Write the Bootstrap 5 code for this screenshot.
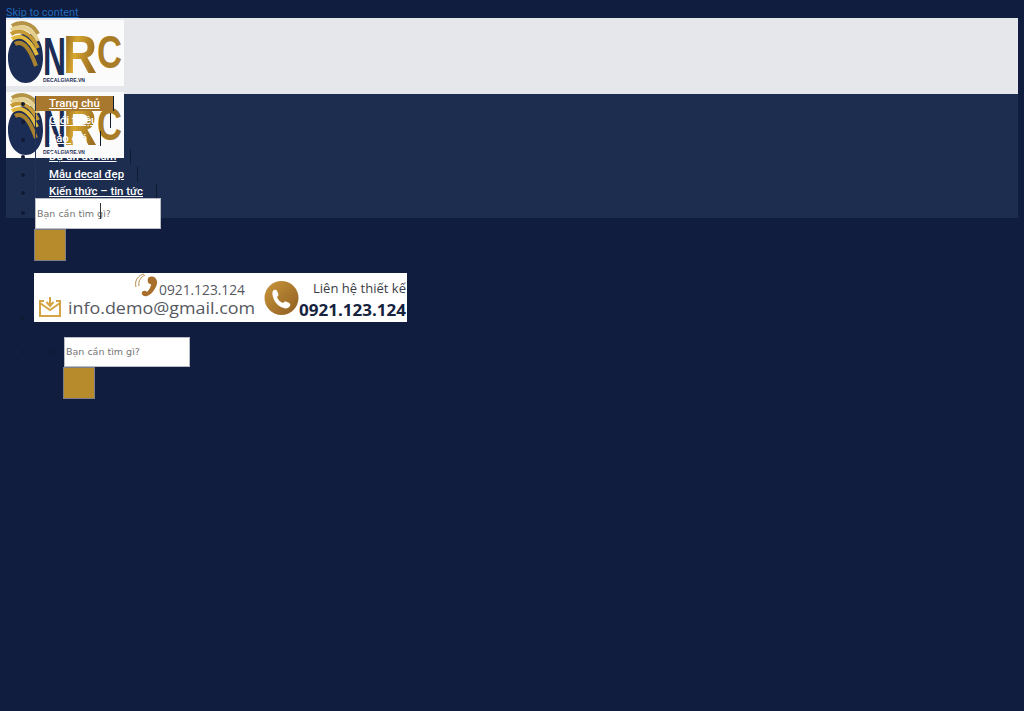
<!DOCTYPE html>
<html lang="vi">
<head>
  <meta charset="UTF-8" />
  <meta name="viewport" content="width=device-width, initial-scale=1.0"/>
  <title>Decal Giá Rẻ</title>
  <link href="https://cdn.jsdelivr.net/npm/bootstrap@5.3.0/dist/css/bootstrap.min.css" rel="stylesheet">
  <style>
    body {
      background-color: #101d3e;
      font-family: Roboto, sans-serif;
      font-size: 12px;
      min-height: 711px;
    }
    .page-box {
      padding: 5px 6px 0;
    }
    .skip-link {
      display: block;
      height: 13px;
      line-height: 15px;
      font-size: 10.9px;
      color: #2068b8;
    }
    .head-band {
      background-color: #e6e7eb;
      height: 76px;
      padding-top: 2px;
    }
    .logo-pic {
      display: block;
      width: 118px;
      height: 66px;
      background-color: #fbfbfb;
    }
    .nav-band {
      background-color: #1c2d50;
      height: 124px;
      position: relative;
    }
    .logo-over {
      position: absolute;
      left: 0;
      top: -2px;
    }
    .menu-list {
      position: relative;
      list-style: disc;
      margin: 0;
      padding: 0 0 0 29px;
      color: #111a33;
    }
    .menu-item {
      height: 17.8px;
    }
    .menu-item a {
      display: inline-block;
      height: 15px;
      line-height: 15px;
      margin-top: 1.500px;
      padding: 0 13px 0 13px;
      font-size: 11.400px;
      color: #fff;
      font-weight: 500;
      border-right: 1px solid #111a33;
      border-left: 1px solid #24345a;
      vertical-align: top;
    }
    .menu-item a.is-on {
      background-color: #a9782f;
    }
    .search-item {
      position: relative;
      margin-top: -3px;
      line-height: 1;
    }
    .search-field {
      display: inline-block;
      width: 126px;
      height: 31px;
      padding: 0 1px;
      font-family: "DejaVu Sans", sans-serif;
      font-size: 9.500px;
      border: 1px solid #b9bcc4;
      border-radius: 0;
      background-color: #fff;
      vertical-align: middle;
    }
    .search-field::placeholder {
      color: #757575;
    }
    .search-btn {
      display: block;
      width: 32px;
      height: 32px;
      margin-left: -1px;
      padding: 0;
      background-color: #b78a2b;
      border: 1px solid #7d7f86;
      border-radius: 0;
    }
    .search-tick {
      position: absolute;
      left: 65px;
      top: 5px;
      width: 1px;
      height: 16px;
      background-color: #333;
    }
    .banner-item {
      height: 76px;
      padding-top: 12px;
      line-height: 1;
    }
    .banner-pic {
      display: inline-block;
      width: 373px;
      height: 49px;
      margin-left: -1px;
      background-color: #fff;
      vertical-align: baseline;
    }
    .sub-list {
      padding-left: 29px;
      list-style: circle;
    }
    .sub-list .search-item {
      margin-top: 0;
    }
    .sub-list .search-field {
      height: 30px;
    }
  </style>
</head>
<body>
<svg width="0" height="0" class="d-block">
  <defs>
    <linearGradient id="goldFill" x1="0" y1="0" x2="1" y2="0.3">
      <stop offset="0" stop-color="#7d5520"/>
      <stop offset="0.45" stop-color="#d6a62e"/>
      <stop offset="1" stop-color="#9c6f22"/>
    </linearGradient>
    <linearGradient id="roundFill" x1="0" y1="0" x2="1" y2="1">
      <stop offset="0" stop-color="#c9973b"/>
      <stop offset="1" stop-color="#8f5d22"/>
    </linearGradient>
    <symbol id="logoMark" viewBox="0 0 118 66">
      <path d="M18 14C32 12 37 24 37 38c0 14-7 25-17 25C8 63 2 50 2 38 2 26 8 15 18 14z" fill="#1b2c55"/>
      <g fill="none" stroke-width="4">
        <path d="M6 6C14 1 26 2 32 14" stroke="#b59445"/>
        <path d="M5 10C13 5 25 6 32 21" stroke="#e3cf8e"/>
        <path d="M5 14C13 9 24 11 32 28" stroke="#c69a35"/>
        <path d="M6 19C14 14 23 17 31 35" stroke="#e2b93f"/>
        <path d="M9 24C16 20 23 26 30 46" stroke="#a98230"/>
      </g>
      <text x="37" y="55" font-family="'Liberation Sans', sans-serif" font-weight="700" font-size="54" textLength="23" lengthAdjust="spacingAndGlyphs" fill="#1b2c55">N</text>
      <text x="57" y="53" font-family="'Liberation Sans', sans-serif" font-weight="700" font-size="54" textLength="34" lengthAdjust="spacingAndGlyphs" fill="url(#goldFill)">R</text>
      <text x="91" y="48" font-family="'Liberation Sans', sans-serif" font-weight="700" font-size="46" textLength="25" lengthAdjust="spacingAndGlyphs" fill="#a97c25">C</text>
      <text x="37" y="62" font-family="'Liberation Sans', sans-serif" font-weight="700" font-size="6" textLength="42" lengthAdjust="spacingAndGlyphs" fill="#1b2c55">DECALGIARE.VN</text>
    </symbol>
  </defs>
</svg>

<div class="page-box">
  <a class="skip-link" href="#">Skip to content</a>
  <header class="head-band">
    <svg class="logo-pic"><use href="#logoMark"/></svg>
  </header>
  <nav class="nav-band">
    <svg class="logo-pic logo-over"><use href="#logoMark"/></svg>
    <ul class="menu-list">
      <li class="menu-item"><a class="is-on" href="#">Trang chủ</a></li>
      <li class="menu-item"><a href="#">Giới thiệu</a></li>
      <li class="menu-item"><a href="#">Báo giá</a></li>
      <li class="menu-item"><a href="#">Dự án đã làm</a></li>
      <li class="menu-item"><a href="#">Mẫu decal đẹp</a></li>
      <li class="menu-item"><a href="#">Kiến thức – tin tức</a></li>
      <li class="search-item">
        <input class="search-field" type="text" placeholder="Bạn cần tìm gì?">
        <span class="search-tick"></span>
        <button class="search-btn" type="button" aria-label="Tìm"></button>
      </li>
      <li class="banner-item">
        <svg class="banner-pic" viewBox="0 0 373 49">
          <path d="M105 13c-1-5 2-9 6-11M102 14c-2-7 3-12 8-13" fill="none" stroke="#b98a4a" stroke-width="1"/>
          <path d="M114 5c4-3 8-1 9 3s-4 13-10 15c-4 1-6-2-5-4 2-2 4-1 5 0 2-2 4-5 4-8-2 0-4-1-3-6z" fill="#a86f2c"/>
          <text x="125" y="22" font-family="'Open Sans', sans-serif" font-size="14" textLength="86" lengthAdjust="spacingAndGlyphs" fill="#55585f">0921.123.124</text>
          <path d="M10 28H6v15h20V28h-4M6 30l10 7 10-7" fill="none" stroke="#d4a343" stroke-width="2"/>
          <path d="M16 24v9M12.500 29l3.500 4 3.500-4" fill="none" stroke="#d4a343" stroke-width="2"/>
          <text x="34" y="41" font-family="'Open Sans', sans-serif" font-size="17" textLength="187" lengthAdjust="spacingAndGlyphs" fill="#55585f">info.demo@gmail.com</text>
          <circle cx="247.500" cy="25" r="17" fill="url(#roundFill)"/>
          <path d="M240 17c2-1 3 0 4 3 1 2 0 3-1 4 1 3 3 5 6 6 1-1 2-2 4-1 3 1 4 2 3 4-2 3-5 3-9 1-4-2-7-6-8-10-1-3-1-6 1-7z" fill="#fff"/>
          <text x="279" y="20" font-family="'Open Sans', sans-serif" font-size="13" textLength="93" lengthAdjust="spacingAndGlyphs" fill="#3a3d45">Liên hệ thiết kế</text>
          <text x="265" y="43" font-family="'Open Sans', sans-serif" font-weight="700" font-size="16" textLength="107" lengthAdjust="spacingAndGlyphs" fill="#16233f">0921.123.124</text>
        </svg>
      </li>
      <li>
        <ul class="menu-list sub-list">
          <li class="search-item">
            <input class="search-field" type="text" placeholder="Bạn cần tìm gì?">
            <button class="search-btn" type="button" aria-label="Tìm"></button>
          </li>
        </ul>
      </li>
    </ul>
  </nav>
</div>
</body>
</html>
